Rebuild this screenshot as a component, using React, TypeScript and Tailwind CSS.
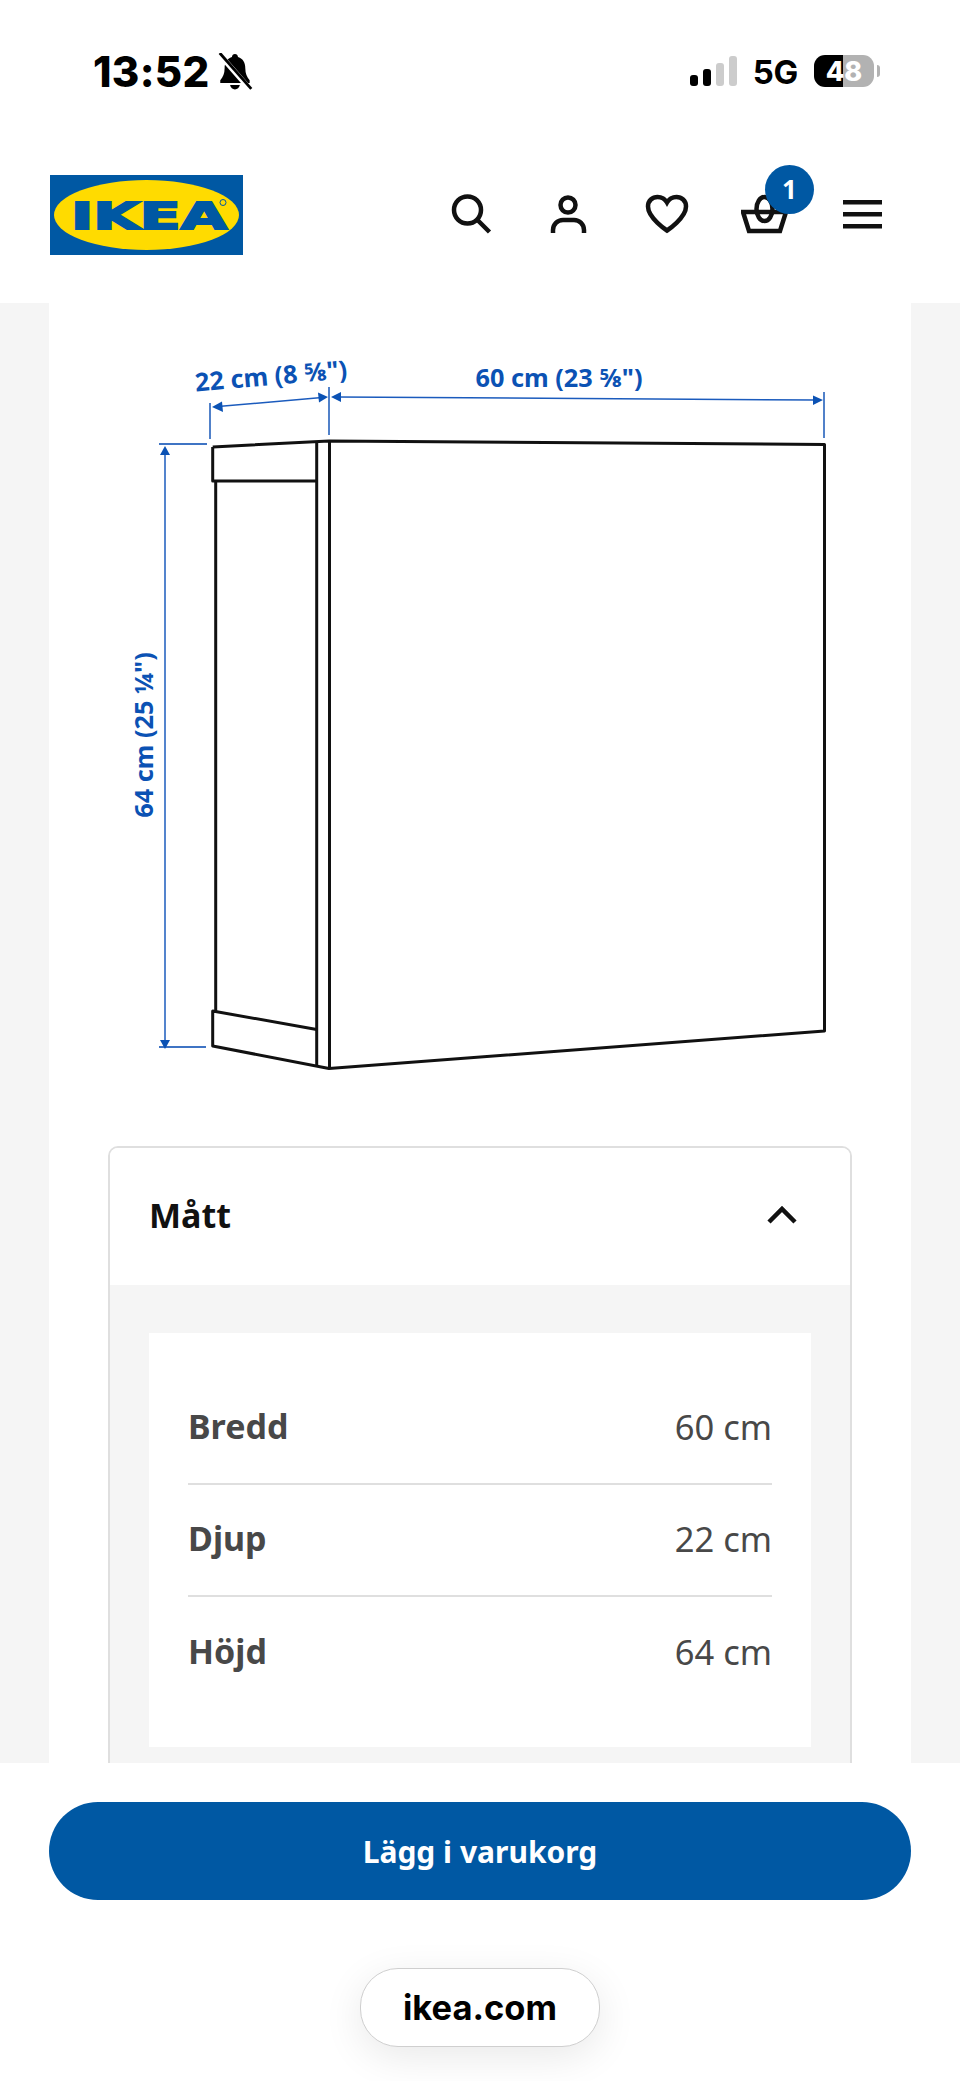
import React from "react";

const BLUE = "#0b52b4";

function BellSlash() {
  return (
    <svg width="35" height="37" viewBox="3 2 31 34" className="ml-[8px] mt-[1px]">
      <path d="M18 3c-1.600 0-2.600 1-2.800 2.600C10.500 7 8.500 11 8.500 16c0 5-1.500 8-4 11v2.500h27V27c-2.500-3-4-6-4-11 0-5-2-9-6.700-10.400C20.600 4 19.600 3 18 3z" fill="#000" />
      <path d="M13.500 31.500c.5 2.500 2.300 4 4.500 4s4-1.500 4.500-4z" fill="#000" />
      <path d="M4 3.500l28 32" stroke="#fff" strokeWidth="5" />
      <path d="M4 2l29 33" stroke="#000" strokeWidth="2.600" />
    </svg>
  );
}

function StatusBar() {
  return (
    <div className="h-[175px] flex items-start pl-[93px] pr-[80px] pt-[52px] [font-family:Inter,sans-serif]">
      <span className="text-[42px] leading-[40px] font-extrabold text-black tracking-[0.3px]">13:52</span>
      <BellSlash />
      <div className="ml-auto flex items-start">
        <div className="flex items-end gap-[5px] h-[30px] mt-[4px]">
          <div className="w-[8px] h-[11px] bg-black rounded-[3px]" />
          <div className="w-[8px] h-[17px] bg-black rounded-[3px]" />
          <div className="w-[8px] h-[23px] bg-[#cccccc] rounded-[3px]" />
          <div className="w-[8px] h-[30px] bg-[#cccccc] rounded-[3px]" />
        </div>
        <span className="ml-[16px] text-[33px] leading-[40px] font-bold text-black tracking-[-0.3px]">5G</span>
        <div className="relative ml-[16px] mt-[3px] w-[60px] h-[32px] rounded-[11px] overflow-hidden flex">
          <div className="w-[29px] bg-black" />
          <div className="flex-1 bg-[#b2b2b2]" />
          <span className="absolute inset-0 flex items-center justify-center text-[27px] font-extrabold text-white leading-none">48</span>
        </div>
        <div className="ml-[3px] mt-[13px] w-[3px] h-[12px] bg-[#b2b2b2] rounded-r-full" />
      </div>
    </div>
  );
}

function Logo() {
  return (
    <svg width="193" height="80" viewBox="0 0 193 80" className="shrink-0">
      <rect width="193" height="80" fill="#0058a3" />
      <ellipse cx="96.500" cy="40" rx="92.500" ry="35" fill="#ffdb00" />
      <text
        x="21"
        y="54"
        textLength="156"
        lengthAdjust="spacingAndGlyphs"
        fill="#0058a3"
        stroke="#0058a3"
        strokeWidth="2"
        fontFamily="'DejaVu Sans', sans-serif"
        fontWeight="700"
        fontSize="38"
      >
        IKEA
      </text>
      <circle cx="173" cy="27.500" r="3" fill="none" stroke="#0058a3" strokeWidth="1" />
    </svg>
  );
}

function Header() {
  return (
    <div className="h-[128px] flex items-start pl-[50px] pr-[73px]">
      <Logo />
      <div className="ml-auto mt-[15px] flex items-center gap-[50px]">
        <svg width="48" height="48" viewBox="0 0 48 48" fill="none" stroke="#111" strokeWidth="4.500">
          <circle cx="20.500" cy="20" r="13.500" />
          <path d="M30.500 30l12 12" />
        </svg>
        <svg width="48" height="48" viewBox="0 0 48 48" fill="none" stroke="#111" strokeWidth="4.500">
          <circle cx="23" cy="15" r="7.500" />
          <path d="M8 43v-3a10 10 0 0 1 10-10h11a10 10 0 0 1 10 10v3" />
        </svg>
        <svg width="48" height="48" viewBox="0 0 48 48" fill="none" stroke="#111" strokeWidth="4.500">
          <path d="M24 40.500C24 40.500 5 28 5 16.500C5 10.500 9.500 7 14.500 7C18.500 7 22 9 24 12.500C26 9 29.500 7 33.500 7C38.500 7 43 10.500 43 16.500C43 28 24 40.500 24 40.500Z" />
        </svg>
        <div className="relative w-[48px] h-[48px]">
          <svg width="48" height="48" viewBox="0 0 48 48" fill="none" stroke="#111" strokeWidth="4.500">
            <path d="M2 22H45L39 41H8Z" />
            <ellipse cx="23.500" cy="19" rx="8" ry="12" />
          </svg>
          <div className="absolute left-[24px] top-[-25px] w-[49px] h-[49px] rounded-full bg-[#0058a3] flex items-center justify-center text-white text-[26px] font-bold [font-family:'Noto_Sans',sans-serif]">
            1
          </div>
        </div>
        <svg width="48" height="48" viewBox="0 0 48 48" fill="#111">
          <rect x="4" y="10" width="39" height="4.500" />
          <rect x="4" y="22" width="39" height="4.500" />
          <rect x="4" y="34" width="39" height="4.500" />
        </svg>
      </div>
    </div>
  );
}

function Diagram() {
  const font = "'Noto Sans', sans-serif";
  return (
    <svg width="862" height="843" viewBox="49 303 862 843" className="block">
      <g fill="none" stroke="#3f74c4" strokeWidth="1.800">
        <path d="M210 403V439M329 387V435M824 392V438" />
        <path d="M159 444H207M159 1047H206" />
      </g>
      <g fill="none" stroke="#1b5bbd" strokeWidth="1.500">
        <path d="M165 452V1040" />
        <path d="M218 406.500L322 397.500" />
        <path d="M338 397L816 400" />
      </g>
      <g fill={BLUE}>
        <path d="M165 446L160 455H170Z" />
        <path d="M165 1049L160 1040H170Z" />
        <path d="M212 407L222 401.500L223 412Z" />
        <path d="M328 397L318 392.500L319 402.500Z" />
        <path d="M331 397L341 392V402Z" />
        <path d="M823 400L813 395.500V405Z" />
      </g>
      <g fill="none" stroke="#111" strokeWidth="3" strokeLinejoin="round">
        <path d="M212.700 447L329 441L824.500 444.500V1031L329 1068.500L212.700 1046V1011L316.700 1029.500" />
        <path d="M212.700 447V481H316.700" />
        <path d="M215.700 481V1011" />
        <path d="M316.700 443V1065" />
        <path d="M329.500 441V1068" />
      </g>
      <g fill={BLUE} fontFamily={font} fontWeight="700" fontSize="25.300">
        <text x="271" y="385" textAnchor="middle" transform="rotate(-5 271 376)">22 cm (8 ⅝")</text>
        <text x="559" y="387" textAnchor="middle">60 cm (23 ⅝")</text>
        <text x="153" y="735" textAnchor="middle" transform="rotate(-90 153 735)">64 cm (25 ¼")</text>
      </g>
    </svg>
  );
}

function Row({ label, value, last }: { label: string; value: string; last?: boolean }) {
  return (
    <div className={"h-[112px] flex items-center justify-between pb-[3px]" + (last ? "" : " border-b-2 border-[#dfdfdf]")}>
      <span className="text-[34px] font-bold text-[#484848]">{label}</span>
      <span className="text-[34.500px] text-[#484848]">{value}</span>
    </div>
  );
}

function Card() {
  return (
    <div className="mx-[59px] border-2 border-[#dfdfdf] rounded-t-[10px] overflow-hidden">
      <div className="h-[137px] bg-white flex items-center justify-between pl-[39px] pr-[53px] pb-[3px]">
        <span className="text-[34px] font-bold text-[#111111]">Mått</span>
        <svg width="30" height="20" viewBox="0 0 30 20" fill="none" stroke="#111" strokeWidth="4.500">
          <path d="M2 17L15 4L28 17" />
        </svg>
      </div>
      <div className="bg-[#f5f5f5] p-[48px_39px_60px_39px]">
        <div className="bg-white pt-[40px] pb-[38px] px-[39px]">
          <Row label="Bredd" value="60 cm" />
          <Row label="Djup" value="22 cm" />
          <Row label="Höjd" value="64 cm" last />
        </div>
      </div>
    </div>
  );
}

export default function App() {
  return (
    <div className="w-[960px] h-[2081px] bg-white flex flex-col overflow-hidden [font-family:'Noto_Sans',sans-serif]">
      <StatusBar />
      <Header />
      <main className="h-[1460px] shrink-0 bg-[#f5f5f5] overflow-hidden px-[49px]">
        <div className="bg-white h-full overflow-hidden">
          <Diagram />
          <Card />
        </div>
      </main>
      <footer className="flex-1 flex flex-col items-center bg-white">
        <button className="mt-[39px] w-[862px] h-[98px] rounded-full bg-[#0058a3] text-white text-[30px] font-bold">
          Lägg i varukorg
        </button>
        <div className="mt-[68px] w-[240px] h-[79px] rounded-[38px] border border-[#cfcfcf] bg-white flex items-center justify-center shadow-[0_10px_40px_rgba(0,0,0,0.09)] text-[34.500px] font-bold text-black [font-family:Inter,sans-serif]">
          ikea.com
        </div>
      </footer>
    </div>
  );
}
